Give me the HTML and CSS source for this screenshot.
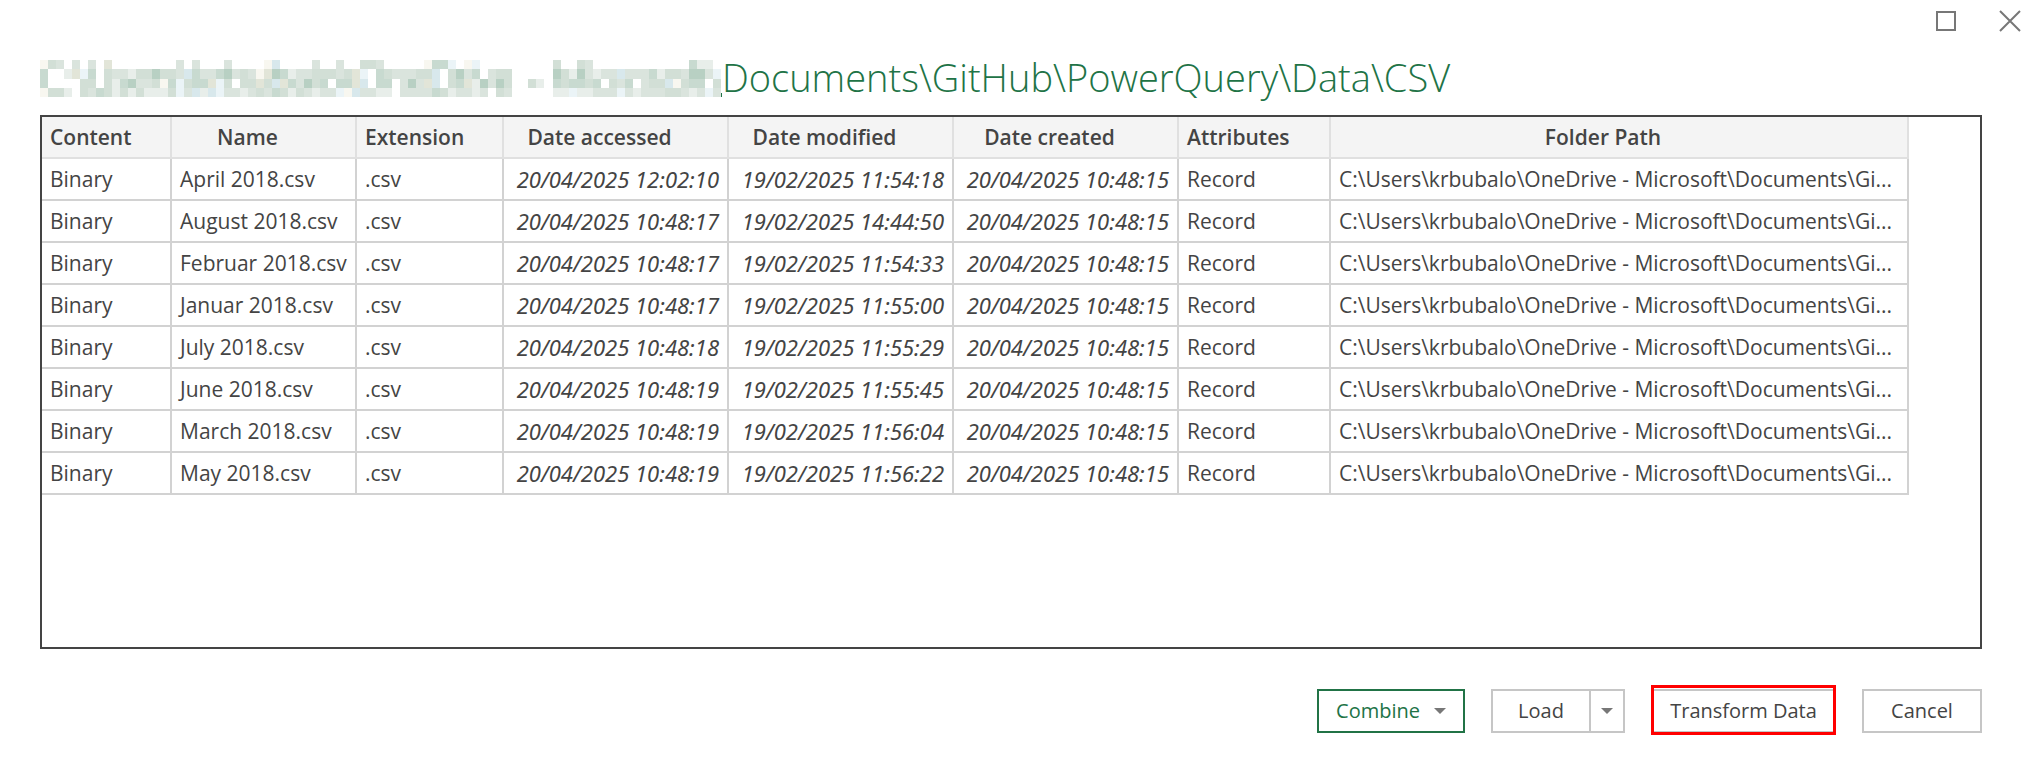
FILE: index.html
```html
<!DOCTYPE html>
<html lang="en">
<head>
<meta charset="utf-8">
<title>Combine files</title>
<link rel="stylesheet" href="styles.css">
</head>
<body class="dialog">
<header class="titlebar">
  <button class="window-button" type="button" aria-label="Maximize"><svg width="20" height="20" viewBox="0 0 20 20"><rect x="1" y="1" width="18" height="18"/></svg></button>
  <button class="window-button" type="button" aria-label="Close"><svg width="22" height="22" viewBox="0 0 22 22"><path d="M1 1L21 21M21 1L1 21"/></svg></button>
</header>
<main class="content">
  <h1 class="path">
    <svg class="redacted" id="redacted" width="682" height="37" viewBox="0 0 682 37" aria-hidden="true" shape-rendering="crispEdges"></svg>
    <span class="path-text">Documents\GitHub\PowerQuery\Data\CSV</span>
  </h1>
  <div class="frame">
    <table class="grid">
      <colgroup><col class="c-content"><col class="c-name"><col class="c-extension"><col class="c-date"><col class="c-date"><col class="c-date"><col class="c-attributes"><col class="c-path"></colgroup>
      <thead>
        <tr><th>Content</th><th>Name</th><th>Extension</th><th>Date accessed</th><th>Date modified</th><th>Date created</th><th>Attributes</th><th>Folder Path</th></tr>
      </thead>
      <tbody>
        <tr><td>Binary</td><td>April 2018.csv</td><td>.csv</td><td class="date">20/04/2025 12:02:10</td><td class="date">19/02/2025 11:54:18</td><td class="date">20/04/2025 10:48:15</td><td>Record</td><td>C:\Users\krbubalo\OneDrive - Microsoft\Documents\Gi...</td></tr>
        <tr><td>Binary</td><td>August 2018.csv</td><td>.csv</td><td class="date">20/04/2025 10:48:17</td><td class="date">19/02/2025 14:44:50</td><td class="date">20/04/2025 10:48:15</td><td>Record</td><td>C:\Users\krbubalo\OneDrive - Microsoft\Documents\Gi...</td></tr>
        <tr><td>Binary</td><td>Februar 2018.csv</td><td>.csv</td><td class="date">20/04/2025 10:48:17</td><td class="date">19/02/2025 11:54:33</td><td class="date">20/04/2025 10:48:15</td><td>Record</td><td>C:\Users\krbubalo\OneDrive - Microsoft\Documents\Gi...</td></tr>
        <tr><td>Binary</td><td>Januar 2018.csv</td><td>.csv</td><td class="date">20/04/2025 10:48:17</td><td class="date">19/02/2025 11:55:00</td><td class="date">20/04/2025 10:48:15</td><td>Record</td><td>C:\Users\krbubalo\OneDrive - Microsoft\Documents\Gi...</td></tr>
        <tr><td>Binary</td><td>July 2018.csv</td><td>.csv</td><td class="date">20/04/2025 10:48:18</td><td class="date">19/02/2025 11:55:29</td><td class="date">20/04/2025 10:48:15</td><td>Record</td><td>C:\Users\krbubalo\OneDrive - Microsoft\Documents\Gi...</td></tr>
        <tr><td>Binary</td><td>June 2018.csv</td><td>.csv</td><td class="date">20/04/2025 10:48:19</td><td class="date">19/02/2025 11:55:45</td><td class="date">20/04/2025 10:48:15</td><td>Record</td><td>C:\Users\krbubalo\OneDrive - Microsoft\Documents\Gi...</td></tr>
        <tr><td>Binary</td><td>March 2018.csv</td><td>.csv</td><td class="date">20/04/2025 10:48:19</td><td class="date">19/02/2025 11:56:04</td><td class="date">20/04/2025 10:48:15</td><td>Record</td><td>C:\Users\krbubalo\OneDrive - Microsoft\Documents\Gi...</td></tr>
        <tr><td>Binary</td><td>May 2018.csv</td><td>.csv</td><td class="date">20/04/2025 10:48:19</td><td class="date">19/02/2025 11:56:22</td><td class="date">20/04/2025 10:48:15</td><td>Record</td><td>C:\Users\krbubalo\OneDrive - Microsoft\Documents\Gi...</td></tr>
      </tbody>
    </table>
  </div>
</main>
<footer class="actions">
  <button class="button button-primary" type="button">Combine <svg class="caret" width="12" height="6" viewBox="0 0 12 6"><path d="M0 0H12L6 6Z"/></svg></button>
  <div class="split">
    <button class="button split-main" type="button">Load</button>
    <button class="button split-toggle" type="button" aria-label="Load options"><svg class="caret" width="12" height="6" viewBox="0 0 12 6"><path d="M0 0H12L6 6Z"/></svg></button>
  </div>
  <button class="button button-marked" type="button">Transform Data</button>
  <button class="button button-cancel" type="button">Cancel</button>
</footer>
<script src="mosaic.js"></script>
</body>
</html>
```
FILE: styles.css
```css
* {
  box-sizing: border-box;
}

.dialog {
  display: flex;
  flex-direction: column;
  min-height: 100vh;
  margin: 0;
  background: #fff;
  color: #444;
  font-family: "Open Sans", "Noto Sans", sans-serif;
  font-size: 20px;
  line-height: 28px;
}

.titlebar {
  display: flex;
  justify-content: flex-end;
  gap: 43px;
  height: 42px;
  padding-right: 9px;
}

.window-button {
  display: flex;
  align-items: center;
  padding: 0;
  border: 0;
  background: none;
}

.window-button svg {
  fill: none;
  stroke: #777;
  stroke-width: 2;
}

.content {
  display: flex;
  flex: 1;
  flex-direction: column;
  padding: 0 48px 0 40px;
}

.path {
  display: flex;
  align-items: center;
  height: 73px;
  margin: 0;
  color: #217346;
  font-size: 38px;
  font-weight: 300;
  white-space: nowrap;
}

.path-text {
  padding-bottom: 4px;
}

.redacted {
  flex: none;
}

.frame {
  flex: 1;
  border: 2px solid #444;
  overflow: hidden;
}

.grid {
  width: 1867px;
  table-layout: fixed;
  border-collapse: separate;
  border-spacing: 0;
  font-size: 21px;
}

.c-content { width: 130px; }
.c-name { width: 185px; }
.c-extension { width: 147px; }
.c-date { width: 225px; }
.c-attributes { width: 152px; }
.c-path { width: 578px; }

.grid th,
.grid td {
  height: 42px;
  padding: 0 8px;
  border: solid #d2d2d2;
  border-width: 0 2px 2px 0;
  text-align: left;
  white-space: nowrap;
}

.grid th {
  padding-right: 40px;
  border-color: #e0e0e0;
  background: #f4f4f4;
  font-weight: 600;
  text-align: center;
}

.grid .date {
  font-family: "Noto Sans", "Open Sans", sans-serif;
  font-size: 22px;
  font-style: italic;
  text-align: right;
}

.actions {
  display: flex;
  justify-content: flex-end;
  gap: 26px;
  padding: 40px 48px 43px;
}

.button {
  display: flex;
  align-items: center;
  justify-content: center;
  height: 44px;
  padding: 0 18px;
  border: 2px solid #c6c6c6;
  border-radius: 0;
  background: #fff;
  color: #444;
  font: inherit;
  white-space: nowrap;
}

.button-primary {
  gap: 14px;
  width: 148px;
  border-color: #217346;
  color: #217346;
}

.caret {
  flex: none;
  fill: #777;
}

.split {
  display: flex;
}

.split-main {
  width: 100px;
}

.split-toggle {
  width: 34px;
  padding: 0;
  border-left: 0;
}

.button-marked {
  position: relative;
  width: 185px;
}

.button-marked::after {
  position: absolute;
  inset: -6px -2px -4px;
  border: 3px solid #f00;
  content: "";
}

.button-cancel {
  width: 120px;
}
```
FILE: mosaic.js
```js
// Draws the pixelated cover over the private part of the path.
const colours = {
  a: "#e8eeea", b: "#dae4dd", c: "#d2dfd6", d: "#c8dad0", e: "#b8d0c3",
  f: "#f8f7f0", g: "#ebf4f7", h: "#d8e8ec", i: "#e2e5d8"
};
const tops = [0, 9, 19, 28, 37];
const groups = [
  { x: 0, rows: [
    "fcb.b.b.i........b.b...b....fh....b..b..ccb.....fddg.fg....",
    "d..aigd.cbbacceccbhdbbdebcbfiedabbcccbcig.dcbbbcch.cebd.bcc",
    "d....cc.cadebbcfdgcddigc.ccichidbecd.ddih.dd.bebih.cdiaebec",
    "fcca.cbdcacacaaacgbhahgbbabcbdcacbabbgfhbbaa.bbbbdcabbab.cb"
  ] },
  { x: 488, rows: ["..", "..", "ca", ".."] },
  { x: 513, rows: [
    "c..cb............daa.",
    "ecaebabbhbbbdaccbeebg",
    "dcddcd.cbd.bcchfcdd.c",
    "aagaabbbgbabbbccbabgb"
  ] }
];
const svg = document.getElementById("redacted");

function addRect(x, y, width, height, fill) {
  const rect = document.createElementNS("http://www.w3.org/2000/svg", "rect");
  Object.entries({ x, y, width, height, fill }).forEach(([key, value]) => rect.setAttribute(key, value));
  svg.append(rect);
}

groups.forEach(group => group.rows.forEach((row, r) => {
  [...row].forEach((key, i) => {
    if (colours[key]) addRect(group.x + i * 8, tops[r], 8, tops[r + 1] - tops[r], colours[key]);
  });
}));
addRect(681, 33, 1, 4, "#217346");
```
